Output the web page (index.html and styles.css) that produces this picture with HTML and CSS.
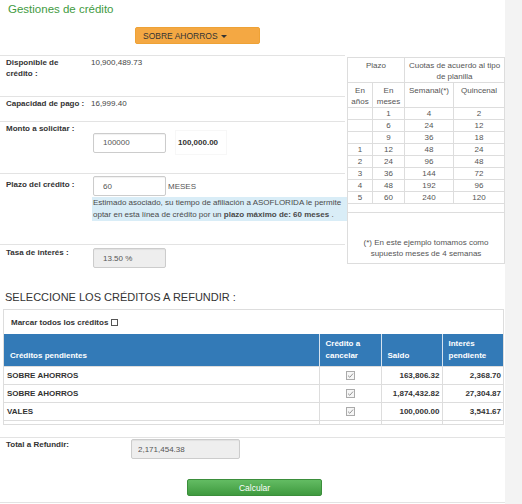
FILE: index.html
```html
<!DOCTYPE html>
<html lang="es">

<head>
    <meta charset="utf-8">
    <meta name="viewport" content="width=device-width, initial-scale=1">
    <title>Gestiones de crédito</title>
    <link rel="stylesheet" href="styles.css">
</head>

<body>
    <div class="page">
        <h1 class="title">Gestiones de crédito</h1>

        <div class="tipo">
            <button class="btn-warning" type="button">SOBRE AHORROS <span class="caret"></span></button>
        </div>

        <!-- Datos del crédito + tabla de plazos -->
        <div class="top">
            <div class="form-col">
                <div class="row row-disp">
                    <div class="lbl">Disponible de crédito :</div>
                    <div class="val">10,900,489.73</div>
                </div>
                <div class="row row-cap">
                    <div class="lbl">Capacidad de pago :</div>
                    <div class="val">16,999.40</div>
                </div>
                <div class="row row-monto">
                    <div class="lbl">Monto a solicitar :</div>
                    <div class="val">
                        <div class="field">
                            <input class="input" type="text" value="100000">
                            <span class="monto-fmt">100,000.00</span>
                        </div>
                    </div>
                </div>
                <div class="row row-plazo">
                    <div class="lbl">Plazo del crédito :</div>
                    <div class="val">
                        <div class="field">
                            <input class="input" type="text" value="60">
                            <span class="unit">MESES</span>
                        </div>
                        <div class="alert-info">
                            Estimado asociado, su tiempo de afiliación a ASOFLORIDA le permite
                            optar en esta línea de crédito por un <b>plazo máximo de: 60 meses</b> .
                        </div>
                    </div>
                </div>
                <div class="row row-tasa">
                    <div class="lbl">Tasa de interés :</div>
                    <div class="val">
                        <div class="field">
                            <input class="input readonly" type="text" value="13.50 %" readonly>
                        </div>
                    </div>
                </div>
            </div>

            <table class="plazos">
                <colgroup>
                    <col style="width: 25px">
                    <col style="width: 32px">
                    <col style="width: 49px">
                    <col>
                </colgroup>
                <tr class="h1">
                    <th colspan="2">Plazo</th>
                    <th colspan="2">Cuotas de acuerdo al tipo de planilla</th>
                </tr>
                <tr class="h2">
                    <th>En años</th>
                    <th>En meses</th>
                    <th>Semanal(*)</th>
                    <th>Quincenal</th>
                </tr>
                <tr><td></td><td>1</td><td>4</td><td>2</td></tr>
                <tr><td></td><td>6</td><td>24</td><td>12</td></tr>
                <tr><td></td><td>9</td><td>36</td><td>18</td></tr>
                <tr><td>1</td><td>12</td><td>48</td><td>24</td></tr>
                <tr><td>2</td><td>24</td><td>96</td><td>48</td></tr>
                <tr><td>3</td><td>36</td><td>144</td><td>72</td></tr>
                <tr><td>4</td><td>48</td><td>192</td><td>96</td></tr>
                <tr><td>5</td><td>60</td><td>240</td><td>120</td></tr>
                <tr class="empty"><td colspan="4"></td></tr>
                <tr class="note"><td colspan="4">(*) En este ejemplo tomamos como supuesto meses de 4 semanas</td></tr>
            </table>
        </div>

        <h2 class="section">SELECCIONE LOS CRÉDITOS A REFUNDIR :</h2>

        <div class="panel">
            <div class="marcar">Marcar todos los créditos <span class="box"></span></div>
            <table class="creditos">
                <colgroup>
                    <col>
                    <col style="width: 62px">
                    <col style="width: 61px">
                    <col style="width: 61px">
                </colgroup>
                <thead>
                    <tr>
                        <th>Créditos pendientes</th>
                        <th>Crédito a cancelar</th>
                        <th>Saldo</th>
                        <th>Interés pendiente</th>
                    </tr>
                </thead>
                <tbody>
                    <tr>
                        <td>SOBRE AHORROS</td>
                        <td class="chk"><svg width="9" height="9" viewBox="0 0 9 9"><rect x="0.5" y="0.5" width="8" height="8" fill="#f6f6f6" stroke="#aaa"/><polyline points="2,4.6 3.8,6.3 7,2.6" fill="none" stroke="#8a8a8a" stroke-width="0.9"/></svg></td>
                        <td class="num">163,806.32</td>
                        <td class="num">2,368.70</td>
                    </tr>
                    <tr>
                        <td>SOBRE AHORROS</td>
                        <td class="chk"><svg width="9" height="9" viewBox="0 0 9 9"><rect x="0.5" y="0.5" width="8" height="8" fill="#f6f6f6" stroke="#aaa"/><polyline points="2,4.6 3.8,6.3 7,2.6" fill="none" stroke="#8a8a8a" stroke-width="0.9"/></svg></td>
                        <td class="num">1,874,432.82</td>
                        <td class="num">27,304.87</td>
                    </tr>
                    <tr>
                        <td>VALES</td>
                        <td class="chk"><svg width="9" height="9" viewBox="0 0 9 9"><rect x="0.5" y="0.5" width="8" height="8" fill="#f6f6f6" stroke="#aaa"/><polyline points="2,4.6 3.8,6.3 7,2.6" fill="none" stroke="#8a8a8a" stroke-width="0.9"/></svg></td>
                        <td class="num">100,000.00</td>
                        <td class="num">3,541.67</td>
                    </tr>
                    <tr class="spacer"><td></td><td></td><td></td><td></td></tr>
                </tbody>
            </table>
        </div>

        <div class="row row-total">
            <div class="lbl">Total a Refundir:</div>
            <div class="val">
                <input class="input readonly wide" type="text" value="2,171,454.38" readonly>
            </div>
        </div>

        <div class="actions">
            <button class="btn-success" type="button">Calcular</button>
        </div>

        <div class="row row-next">
            <div class="lbl"></div>
            <div class="val">
                <input class="input readonly wide" type="text" value="" readonly>
            </div>
        </div>
    </div>
</body>

</html>
```

FILE: styles.css
```css
* {
    margin: 0;
    padding: 0;
    box-sizing: border-box;
}

html,
body {
    height: 100%;
    overflow: hidden;
}

body {
    background: #f3f3f3;
    font-family: 'Liberation Sans', Arial, sans-serif;
    font-size: 8px;
    color: #333;
}

.page {
    width: 505px;
    min-height: 100%;
    background: #fff;
}

/* Header */
.title {
    padding: 1px 8px 0;
    font-size: 11.5px;
    line-height: 16px;
    font-weight: normal;
    color: #3f9b3f;
}

.tipo {
    padding: 10px 0 0 135px;
}

.btn-warning {
    width: 125px;
    height: 17px;
    background: #f4a843;
    border: 1px solid #eea236;
    border-radius: 2px;
    font-family: inherit;
    font-size: 8.5px;
    color: #333;
    text-align: left;
    padding-left: 7px;
}

.caret {
    display: inline-block;
    width: 0;
    height: 0;
    margin-left: 1px;
    vertical-align: middle;
    border-top: 3px solid #333;
    border-left: 3px solid transparent;
    border-right: 3px solid transparent;
}

/* Top block */
.top {
    display: flex;
    align-items: flex-start;
    margin-top: 11px;
}

.form-col {
    width: 345px;
    flex: 0 0 345px;
}

.row {
    display: flex;
    border-top: 1px solid #e3e3e3;
    padding-top: 1px;
}

.lbl {
    flex: 0 0 91px;
    padding: 0 6px;
    font-weight: bold;
    line-height: 11px;
}

.val {
    flex: 1;
    min-width: 0;
    line-height: 11px;
    color: #444;
}

.row-disp {
    height: 41px;
}

.row-cap {
    height: 25px;
}

.row-monto {
    height: 52px;
}

.row-monto .field {
    margin-top: 7px;
}

.row-plazo {
    height: 71px;
}

.row-plazo .lbl {
    padding-top: 4px;
}

.row-plazo .field {
    margin-top: 1px;
}

.row-tasa {
    height: 35px;
}

.row-tasa .lbl {
    padding-top: 1px;
}

.row-tasa .field {
    margin-top: 2px;
}

.field {
    display: flex;
    align-items: center;
}

.input {
    width: 73px;
    height: 20px;
    margin-left: 2px;
    padding-left: 9px;
    border: 1px solid #ccc;
    border-radius: 2px;
    box-shadow: inset 0 1px 1px rgba(0, 0, 0, 0.06);
    font-family: inherit;
    font-size: 8px;
    color: #555;
    background: #fff;
}

.input.readonly {
    background: #eee;
}

.input.wide {
    width: 109px;
    margin-left: 0;
    padding-left: 6px;
}

.monto-fmt {
    margin-left: 9px;
    padding: 6px 8px 6px 2px;
    border: 1px solid #f7f7f7;
    font-weight: bold;
    color: #333;
}

.unit {
    margin-left: 2px;
    color: #555;
}

.alert-info {
    margin: 1px -3px 0 1px;
    padding-left: 1px;
    background: #d9edf7;
    color: #4a4a4a;
    font-size: 8px;
    line-height: 12px;
}

/* Plazos table */
.plazos {
    width: 158px;
    margin: 2px 0 0 2px;
    border-collapse: collapse;
    table-layout: fixed;
    color: #555;
    text-align: center;
}

.plazos th,
.plazos td {
    border: 1px solid #ddd;
    font-weight: normal;
    line-height: 11px;
}

.plazos th {
    vertical-align: top;
    padding-top: 2px;
}

.plazos .h1 th {
    height: 25px;
}

.plazos .h2 th {
    height: 25px;
    padding-top: 2px;
}

.plazos td {
    height: 12px;
    padding: 0;
}

.plazos .empty td {
    height: 9px;
}

.plazos .note td {
    height: 51px;
    vertical-align: bottom;
    padding: 0 6px 4px;
}

/* Créditos a refundir */
.section {
    margin-top: 11px;
    padding-left: 5px;
    font-size: 11px;
    line-height: 14px;
    font-weight: normal;
    color: #333;
}

.panel {
    margin: 5px 1px 0 3px;
    border: 1px solid #ddd;
}

.marcar {
    height: 24px;
    padding: 7px 0 0 7px;
    font-weight: bold;
    line-height: 11px;
}

.box {
    display: inline-block;
    width: 7px;
    height: 7px;
    border: 1px solid #555;
    vertical-align: -1px;
    background: #fff;
}

.creditos {
    width: 100%;
    border-collapse: collapse;
    table-layout: fixed;
}

.creditos th {
    height: 32px;
    background: #337ab7;
    color: #fff;
    text-align: left;
    vertical-align: bottom;
    padding: 0 5px 4px 6px;
    line-height: 12px;
    border-left: 1px solid #d6e3ef;
}

.creditos th:first-child {
    border-left: 0;
}

.creditos td {
    height: 18px;
    padding: 0 2px 0 3px;
    border-top: 1px solid #ddd;
    border-left: 1px solid #ddd;
    font-weight: bold;
    color: #333;
}

.creditos td:first-child {
    border-left: 0;
}

.creditos .chk {
    text-align: center;
    line-height: 0;
}

.creditos .num {
    text-align: right;
}

.creditos .spacer td {
    height: 4px;
}

/* Total */
.row-total {
    margin-top: 12px;
    height: 36px;
}

.row-total .lbl,
.row-next .lbl {
    flex-basis: 131px;
}

.actions {
    display: flex;
    justify-content: center;
    padding: 6px 0 6px 4px;
}

.btn-success {
    width: 135px;
    height: 17px;
    background: linear-gradient(#63bc63, #3f9a3f);
    border: 1px solid #3b8e3b;
    border-radius: 2px;
    font-family: inherit;
    font-size: 8.5px;
    color: #fff;
}

.row-next {
    height: 20px;
}
```
